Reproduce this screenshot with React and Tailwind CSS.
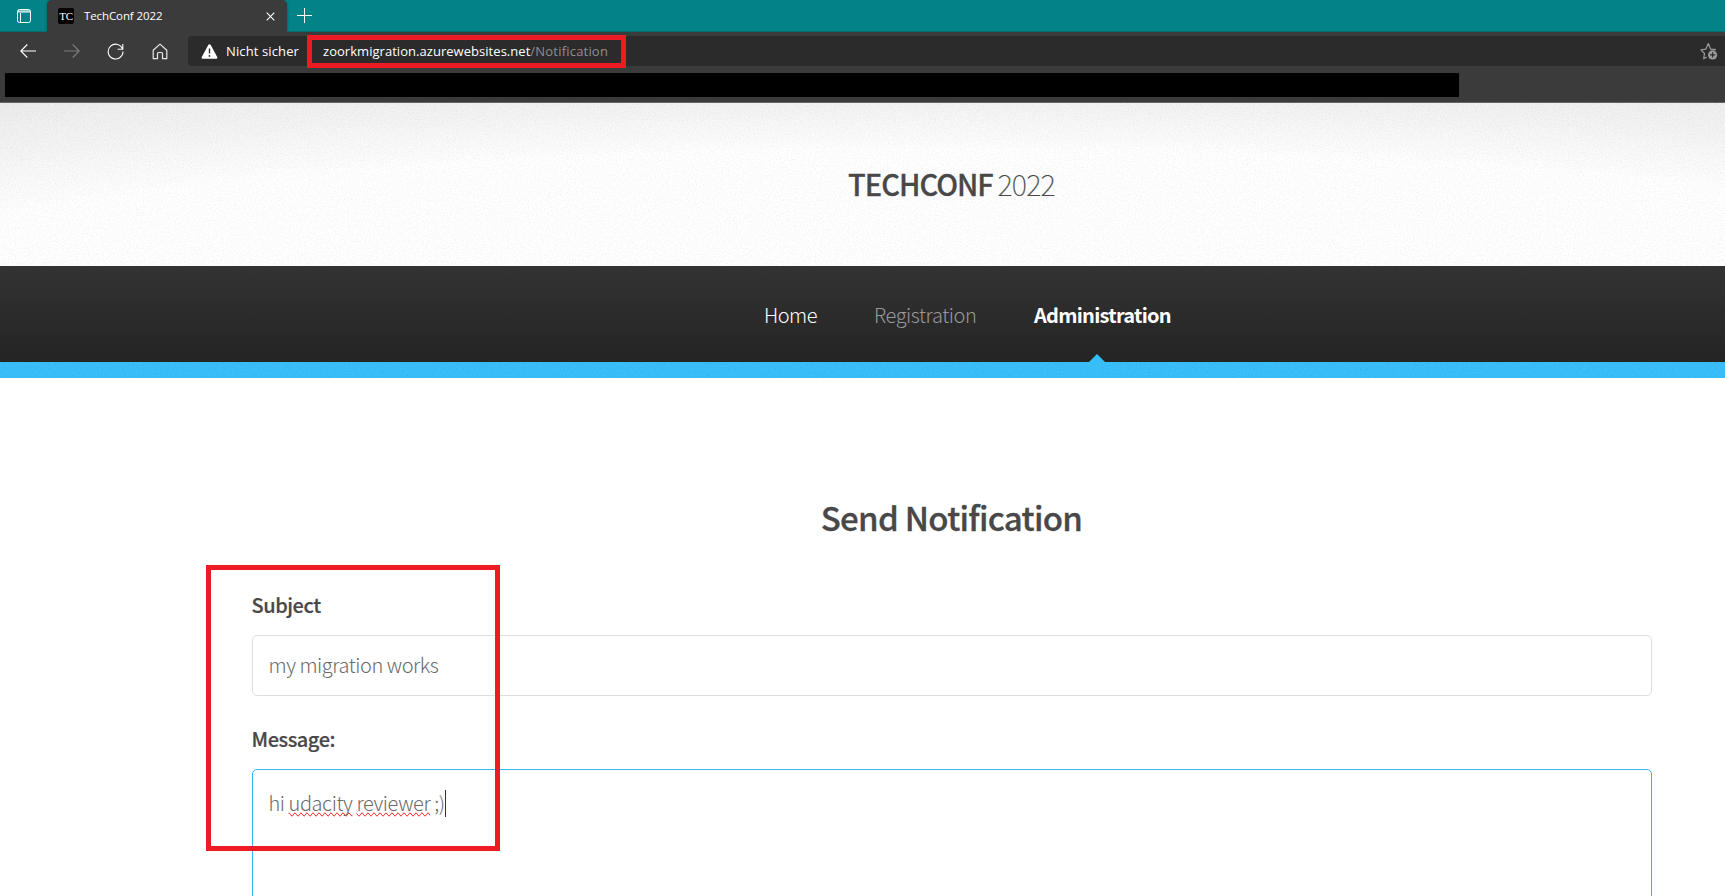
import { useId } from "react";

const site = "font-['Noto_Sans_CJK_JP',sans-serif]";

function Grain({ opacity, frequency = 0.85 }) {
  const id = useId();
  return (
    <svg className="pointer-events-none absolute inset-0 h-full w-full" aria-hidden="true">
      <filter id={id} x="0" y="0" width="100%" height="100%">
        <feTurbulence type="fractalNoise" baseFrequency={frequency} numOctaves="2" seed="4" stitchTiles="stitch" />
        <feColorMatrix values={`0 0 0 0 0  0 0 0 0 0  0 0 0 0 0  ${opacity} 0 0 0 ${-opacity * 0.42}`} />
      </filter>
      <rect width="100%" height="100%" filter={`url(#${id})`} />
    </svg>
  );
}

function TabStrip() {
  return (
    <div className="flex h-8 items-stretch border-b border-[#046e71] bg-[#038387]">
      <div className="flex w-[47px] items-center pl-[17px]">
        <svg width="14" height="14" viewBox="0 0 14 14" fill="none" stroke="#fff">
          <rect x="0.5" y="0.5" width="13" height="13" rx="2" />
          <path d="M1 2h12M1 3h12M3.5 4v9" />
        </svg>
      </div>
      <div className="-mb-px flex w-60 items-center rounded-t-[5px] bg-[#3b3b3b] pl-[11px] shadow-[0_0_3px_rgba(0,0,0,0.35)]">
        <div className="flex size-4 items-center justify-center rounded-[2px] bg-black font-['Liberation_Serif',serif] text-[11px] leading-none tracking-[-0.3px] text-white">
          TC
        </div>
        <span className="ml-[10px] w-[176px] pb-px text-[11.5px] leading-4 tracking-[-0.1px] text-white">TechConf 2022</span>
        <svg className="mt-px ml-[6px] -mr-1" width="9" height="9" viewBox="0 0 9 9" stroke="#fff" strokeWidth="1.1">
          <path d="M0.7 0.7l7.6 7.6M8.3 0.7L0.7 8.3" />
        </svg>
      </div>
      <svg className="mt-2 ml-[10px]" width="15" height="15" viewBox="0 0 15 15" stroke="#fff">
        <path d="M7.5 0v15M0 7.5h15" />
      </svg>
    </div>
  );
}

function AddressBar() {
  return (
    <div className="flex h-[41px] items-start bg-[#3b3b3b] pt-1">
      <div className="flex h-[30px] w-[188px] items-center">
        <svg className="ml-5" width="16" height="14" viewBox="0 0 16 14" fill="none" stroke="#fff" strokeWidth="1.1">
          <path d="M16 7H0.8M7.3 0.5L0.8 7l6.5 6.5" />
        </svg>
        <svg className="ml-7" width="16" height="14" viewBox="0 0 16 14" fill="none" stroke="#7d7d7d" strokeWidth="1.1">
          <path d="M0 7h15.2M8.7 0.5L15.2 7l-6.5 6.5" />
        </svg>
        <svg className="ml-[27px]" width="17" height="17" viewBox="0 0 17 17" fill="none" stroke="#fff" strokeWidth="1.1">
          <path d="M15.6 6.2A7.4 7.4 0 1 0 16 8.6M15.8 1v5.2h-5.2" />
        </svg>
        <svg className="ml-7" width="16" height="17" viewBox="0 0 16 17" fill="none" stroke="#e8e8e8" strokeWidth="1.2" strokeLinejoin="round">
          <path d="M1.2 7.3L8 1.1l6.8 6.2v8.4h-4.3v-5.2a1 1 0 0 0-1-1h-3a1 1 0 0 0-1 1v5.2H1.2z" />
        </svg>
      </div>
      <div className="flex h-[30px] flex-1 items-center rounded-l bg-[#2b2b2b] pr-[7px] pl-[13px] text-[13px] leading-none">
        <svg width="17" height="15" viewBox="0 0 17 15">
          <path d="M7.4 0.8a1.25 1.25 0 0 1 2.2 0l6.6 12.1a1.2 1.2 0 0 1-1.1 1.8H1.9a1.2 1.2 0 0 1-1.1-1.8z" fill="#fff" />
          <path d="M8.5 4.5v5" stroke="#2b2b2b" strokeWidth="1.4" />
          <circle cx="8.5" cy="11.9" r="0.95" fill="#2b2b2b" />
        </svg>
        <span className="ml-2 w-[97px] tracking-[0.12px] text-white">Nicht sicher</span>
        <span className="tracking-[0.04px] text-white">zoorkmigration.azurewebsites.net</span>
        <span className="tracking-[0.2px] text-[#8f8f8f]">/Notification</span>
        <svg className="ml-auto" width="18" height="18" viewBox="0 0 18 18" fill="none">
          <path
            d="M6.6 15.1l-2.9 1.6.8-5.2L0.9 7.9l5-.8L8.3 1.6l2.3 5.5 5.4.6"
            stroke="#9a9a9a"
            strokeWidth="1.2"
            strokeLinejoin="round"
          />
          <circle cx="12.6" cy="12.9" r="4.6" fill="#9a9a9a" />
          <path d="M12.6 10.3v5.2M10 12.9h5.2" stroke="#2b2b2b" strokeWidth="1.1" />
        </svg>
      </div>
    </div>
  );
}

function FavouritesBar() {
  return (
    <div className="h-[30px] border-b border-[#666] bg-[#3b3b3b] pl-[5px]">
      <div className="h-6 w-[1454px] bg-black" />
    </div>
  );
}

function SiteHeader() {
  return (
    <header className="relative flex h-[163px] items-start bg-[radial-gradient(1200px_135px_at_950px_163px,#fff_86%,#f4f4f4_118%,#ececec_145%)] pt-[60px] pl-[848px]">
      <Grain opacity={0.12} />
      <h1 className="relative flex text-[29px] leading-10 whitespace-pre text-[#484848]">
        <span className="w-[149.5px] font-medium tracking-[-0.98px] [-webkit-text-stroke:0.3px_#484848]">TECHCONF</span>
        <span className="font-thin tracking-[-0.75px] [-webkit-text-stroke:0.2px_#484848]">2022</span>
      </h1>
    </header>
  );
}

function SiteNav() {
  return (
    <nav className="relative flex h-24 items-center bg-linear-to-b from-[#333] to-[#242424] pt-[2px] pl-[764px] text-xl leading-none">
      <a className="w-[110px] font-light tracking-[-0.5px] text-white">Home</a>
      <a className="w-[160px] font-light tracking-[-0.42px] text-[#999]">Registration</a>
      <a className="relative font-bold tracking-[-0.74px] text-white">
        Administration
        <svg className="absolute top-[49px] left-[55px]" width="16" height="8" viewBox="0 0 16 8">
          <path d="M0 8L8 0l8 8z" fill="#37bdf9" />
        </svg>
      </a>
    </nav>
  );
}

const misspelt = "[text-decoration-line:spelling-error]";

function NotificationForm() {
  return (
    <main className="flex flex-1 flex-col overflow-hidden bg-white pl-[252px] text-xl text-[#484848]">
      <h2 className="mt-[119px] w-[1399px] shrink-0 text-center text-[33px] leading-10 font-medium tracking-[-0.7px] [-webkit-text-stroke:0.3px_#484848]">
        Send Notification
      </h2>
      <label className="mt-[56px] -ml-[0.5px] leading-6 font-medium tracking-[-0.45px] [-webkit-text-stroke:0.2px_#484848]">Subject</label>
      <div className="mt-[18px] flex h-[61px] w-[1400px] shrink-0 items-center rounded-[5px] border border-[#dedede] px-[15.5px] pb-[2px] font-light tracking-[-0.45px] text-[#6a6a6a]">
        my migration works
      </div>
      <label className="mt-[31px] -ml-[0.5px] leading-6 font-medium tracking-[-0.45px] [-webkit-text-stroke:0.2px_#484848]">Message:</label>
      <div className="mt-[18px] flex h-[160px] w-[1400px] shrink-0 items-start rounded-[5px] border border-[#38b6f1] px-[15.5px] pt-[19px] leading-7 font-light tracking-[-0.42px] whitespace-pre text-[#6a6a6a]">
        <p>
          hi <span className={misspelt}>udacity</span> <span className={misspelt}>reviewer</span> ;)
        </p>
        <span className="mt-px h-[27px] w-px bg-[#333]" />
      </div>
    </main>
  );
}

export default function App() {
  return (
    <div className="relative flex h-[896px] w-[1725px] flex-col overflow-hidden bg-white font-['Open_Sans',sans-serif]">
      <TabStrip />
      <AddressBar />
      <FavouritesBar />
      <div className={`flex min-h-0 flex-1 flex-col ${site}`}>
        <SiteHeader />
        <SiteNav />
        <div className="relative h-4 shrink-0 bg-[#39c0fb]">
          <Grain opacity={0.16} />
        </div>
        <NotificationForm />
      </div>
      <div className="absolute top-[35px] left-[307px] h-[33px] w-[319px] border-[5px] border-[#ed1c24]" />
      <div className="absolute top-[565px] left-[206px] h-[286px] w-[294px] border-[5px] border-[#ed1c24]" />
    </div>
  );
}
